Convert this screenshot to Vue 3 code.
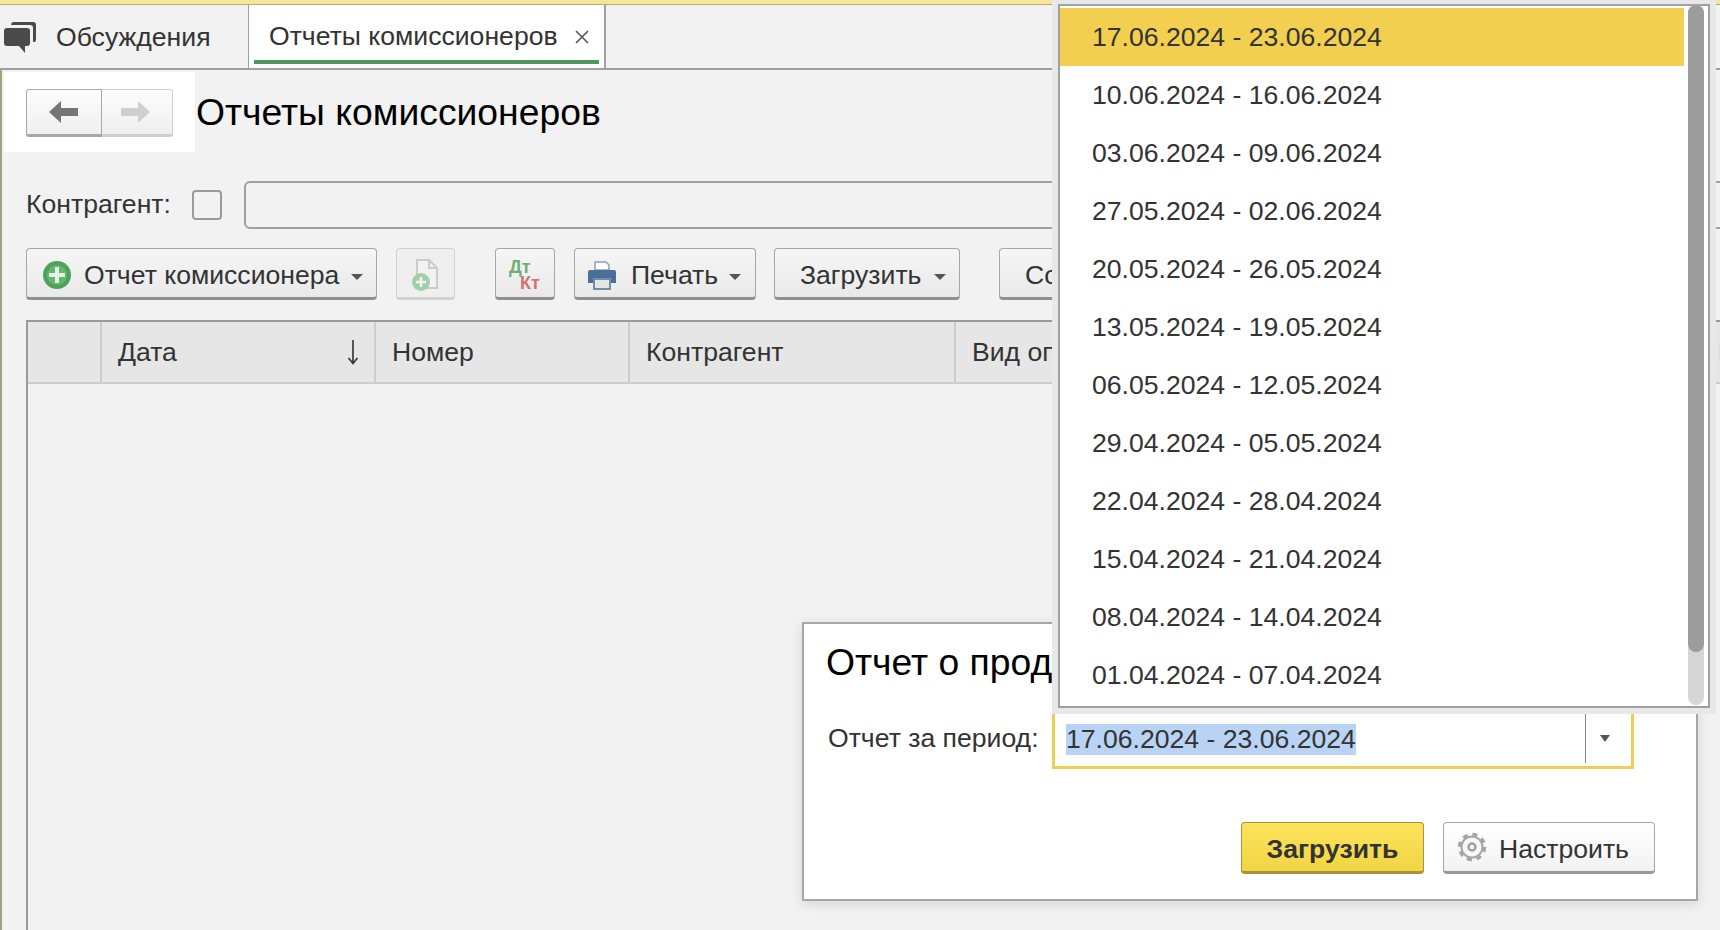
<script setup>
const periods = [
  "17.06.2024 - 23.06.2024",
  "10.06.2024 - 16.06.2024",
  "03.06.2024 - 09.06.2024",
  "27.05.2024 - 02.06.2024",
  "20.05.2024 - 26.05.2024",
  "13.05.2024 - 19.05.2024",
  "06.05.2024 - 12.05.2024",
  "29.04.2024 - 05.05.2024",
  "22.04.2024 - 28.04.2024",
  "15.04.2024 - 21.04.2024",
  "08.04.2024 - 14.04.2024",
  "01.04.2024 - 07.04.2024"
]

const columns = [
  { title: "", width: 74 },
  { title: "Дата", width: 274, sort: true },
  { title: "Номер", width: 254 },
  { title: "Контрагент", width: 326 },
  { title: "Вид операции", width: 746 },
  { title: "Номер", width: 200 }
]
</script>

<template>
  <div class="page">
    <div class="stripe"></div>

    <div class="tabs">
      <div class="tab-plain">
        <svg class="chat" width="34" height="32" viewBox="0 0 34 32">
          <path d="M10 0h20a3 3 0 0 1 3 3v15a2 2 0 0 1-2 2h-1V6a3 3 0 0 0-3-3H8a3 3 0 0 1 2-3z" fill="#4a4a4a" />
          <path d="M4 6h20a3 3 0 0 1 3 3v12a3 3 0 0 1-3 3h-2v7l-6-7H4a3 3 0 0 1-3-3V9a3 3 0 0 1 3-3z" fill="#4a4a4a" />
        </svg>
        <span>Обсуждения</span>
      </div>
      <div class="tab-active">
        <span>Отчеты комиссионеров</span>
        <svg class="close" width="16" height="16" viewBox="0 0 16 16">
          <path d="M2 2l12 12M14 2L2 14" stroke="#555" stroke-width="1.6" fill="none" />
        </svg>
        <div class="tab-line"></div>
      </div>
    </div>

    <div class="content">
      <div class="head">
        <div class="nav-box">
          <div class="nav">
            <div class="nav-back">
              <svg width="30" height="22" viewBox="0 0 30 22">
                <path d="M0 11L12 0v7h17v8H12v7z" fill="#757575" />
              </svg>
            </div>
            <div class="nav-next">
              <svg width="30" height="22" viewBox="0 0 30 22">
                <path d="M30 11L18 0v7H1v8h17v7z" fill="#cfcfcf" />
              </svg>
            </div>
          </div>
        </div>
        <h1 class="title">Отчеты комиссионеров</h1>
      </div>

      <div class="filter">
        <span class="filter-label">Контрагент:</span>
        <span class="check"></span>
        <div class="input"></div>
      </div>

      <div class="toolbar">
        <div class="btn btn-report">
          <svg width="30" height="30" viewBox="0 0 30 30">
            <circle cx="15" cy="15" r="14" fill="#4ea35a" />
            <circle cx="15" cy="15" r="10" fill="#62b96e" />
            <path d="M15 7v16M7 15h16" stroke="#e9f5ea" stroke-width="4" />
          </svg>
          <span class="btn-text">Отчет комиссионера</span>
          <i class="caret"></i>
        </div>
        <div class="btn btn-file">
          <svg width="30" height="34" viewBox="0 0 30 34">
            <path d="M6 2h12l8 8v20H6z" fill="#f2f2f2" stroke="#cbcbcb" stroke-width="2" />
            <path d="M18 2v8h8" fill="none" stroke="#cbcbcb" stroke-width="2" />
            <circle cx="10" cy="24" r="9" fill="#a3cfa8" />
            <path d="M10 19v10M5 24h10" stroke="#f2f2f2" stroke-width="2.5" />
          </svg>
        </div>
        <div class="btn btn-dtkt">
          <span class="dt">Дт</span>
          <span class="kt">Кт</span>
        </div>
        <div class="btn btn-print">
          <svg width="30" height="30" viewBox="0 0 30 30">
            <path d="M8 10V2h11l3 3v5z" fill="#fff" stroke="#88a0bd" stroke-width="1.5" />
            <path d="M3 10h24a2 2 0 0 1 2 2v11h-5v-5H6v5H1V12a2 2 0 0 1 2-2z" fill="#4c6f99" />
            <path d="M7 19h16v10H7z" fill="#e6e6e6" stroke="#4c6f99" stroke-width="1.5" />
          </svg>
          <span class="btn-text">Печать</span>
          <i class="caret"></i>
        </div>
        <div class="btn btn-load">
          <span class="btn-text">Загрузить</span>
          <i class="caret"></i>
        </div>
        <div class="btn btn-create">
          <span class="btn-text">Создать</span>
        </div>
      </div>

      <div class="table">
        <div class="thead">
          <div
            v-for="(col, i) in columns"
            :key="i"
            class="th"
            :style="{ width: col.width + 'px' }"
          >
            <span>{{ col.title }}</span>
            <svg v-if="col.sort" class="sort" width="12" height="26" viewBox="0 0 12 26">
              <path d="M6 1v23M1.5 19L6 24.500l4.500-5.500" fill="none" stroke="#333" stroke-width="1.6" />
            </svg>
          </div>
        </div>
      </div>
    </div>

    <div class="dialog">
      <div class="dialog-title">Отчет о продажах</div>
      <div class="dialog-row">
        <span class="dialog-label">Отчет за период:</span>
        <div class="field">
          <span class="field-text">17.06.2024 - 23.06.2024</span>
          <div class="field-btn"><i class="caret caret-small"></i></div>
        </div>
      </div>
      <div class="dialog-actions">
        <div class="btn-primary">Загрузить</div>
        <div class="btn-setup">
          <svg width="32" height="32" viewBox="0 0 32 32">
            <circle cx="16" cy="16" r="12.500" fill="none" stroke="#a6a6a6" stroke-width="3.500" stroke-dasharray="5 4.820" />
            <circle cx="16" cy="16" r="10.500" fill="#f8f8f8" stroke="#a6a6a6" stroke-width="2" />
            <circle cx="16" cy="16" r="3.500" fill="none" stroke="#a0a0a0" stroke-width="2.500" />
          </svg>
          <span>Настроить</span>
        </div>
      </div>
    </div>

    <div class="dropdown">
      <div
        v-for="(period, i) in periods"
        :key="period"
        class="row"
        :class="{ 'row-current': i === 0 }"
      >{{ period }}</div>
      <div class="track"><div class="thumb"></div></div>
    </div>
  </div>
</template>

<style>
html,
body {
  margin: 0;
  overflow: hidden;
}
</style>

<style scoped>
.page {
  position: relative;
  width: 1720px;
  height: 930px;
  overflow: hidden;
  background: #f2f2f2;
  font-family: "Liberation Sans", Arial, sans-serif;
  font-size: 26.600px;
  color: #333;
  display: flex;
  flex-direction: column;
}

.stripe {
  flex: none;
  height: 4px;
  background: #f7e59b;
  border-bottom: 1px solid #b9aa70;
}

.tabs {
  flex: none;
  height: 63px;
  display: flex;
  border-bottom: 2px solid #a0a0a0;
}

.tab-plain {
  width: 248px;
  display: flex;
  align-items: center;
  padding: 0 0 0 3px;
  box-sizing: border-box;
  margin-top: 2px;
}

.tab-plain span {
  margin-left: 19px;
}

.chat {
  flex: none;
}

.tab-active {
  position: relative;
  width: 358px;
  box-sizing: border-box;
  padding: 0 14px 0 20px;
  margin-bottom: -2px;
  display: flex;
  align-items: center;
  justify-content: space-between;
  background: #fff;
  border-left: 1px solid #a0a0a0;
  border-right: 2px solid #a0a0a0;
  border-bottom: 2px solid #a0a0a0;
}

.tab-line {
  position: absolute;
  left: 5px;
  right: 5px;
  bottom: 4px;
  height: 4px;
  background: #4f9a5b;
}

.content {
  flex: 1;
  min-height: 0;
  display: flex;
  flex-direction: column;
  border-left: 2px solid #a89f7c;
}

.head {
  flex: none;
  display: flex;
  align-items: center;
  height: 80px;
  margin-top: 2px;
  padding-left: 2px;
}

.nav-box {
  width: 191px;
  height: 80px;
  box-sizing: border-box;
  padding: 17px 22px;
  background: #fff;
}

.nav {
  display: flex;
  width: 147px;
  height: 48px;
}

.nav-back,
.nav-next {
  display: flex;
  align-items: center;
  justify-content: center;
  box-sizing: border-box;
  height: 48px;
  background: linear-gradient(#fdfdfd, #efefef);
}

.nav-back {
  width: 76px;
  border: 1px solid #a8a8a8;
  border-bottom: 3px solid #a8a8a8;
  border-radius: 3px 0 0 3px;
}

.nav-next {
  width: 71px;
  padding-right: 4px;
  border: 1px solid #cfcfcf;
  border-left: none;
  border-bottom: 3px solid #cfcfcf;
  border-radius: 0 3px 3px 0;
}

.title {
  margin: 0 0 0 1px;
  font-size: 37.300px;
  font-weight: 400;
  color: #000;
  white-space: nowrap;
}

.filter {
  flex: none;
  display: flex;
  align-items: center;
  height: 48px;
  margin-top: 29px;
  padding-left: 24px;
}

.filter-label {
  width: 166px;
  flex: none;
  margin-top: -2px;
}

.check {
  flex: none;
  width: 30px;
  height: 30px;
  box-sizing: border-box;
  border: 2px solid #9a9a9a;
  border-radius: 4px;
}

.input {
  flex: none;
  margin-left: 22px;
  width: 1600px;
  height: 48px;
  box-sizing: border-box;
  border: 2px solid #a0a0a0;
  border-radius: 6px;
}

.toolbar {
  flex: none;
  display: flex;
  height: 52px;
  margin-top: 19px;
  padding-left: 24px;
}

.btn {
  flex: none;
  display: flex;
  align-items: center;
  box-sizing: border-box;
  height: 52px;
  padding-top: 4px;
  background: linear-gradient(#f6f6f6, #e9e9e9);
  border: 1px solid #a6a6a6;
  border-bottom: 3px solid #8f8f8f;
  border-radius: 4px;
  white-space: nowrap;
}

.btn-text {
  flex: none;
}

.caret {
  display: inline-block;
  flex: none;
  width: 0;
  height: 0;
  border-left: 6px solid transparent;
  border-right: 6px solid transparent;
  border-top: 6px solid #555;
  margin-top: 3px;
}

.caret-small {
  border-left-width: 5px;
  border-right-width: 5px;
  border-top-width: 7px;
}

.btn-report {
  width: 351px;
  padding-left: 15px;
}

.btn-report .btn-text {
  margin-left: 12px;
}

.btn-report .caret {
  margin-left: 12px;
}

.btn-file {
  width: 59px;
  margin-left: 19px;
  justify-content: center;
  border-color: #d2d2d2;
  background: #efefef;
}

.btn-dtkt {
  position: relative;
  width: 60px;
  margin-left: 40px;
  font-weight: 700;
  font-size: 18px;
  line-height: 16px;
}

.dt {
  position: absolute;
  left: 13px;
  top: 10px;
  color: #6fae78;
}

.kt {
  position: absolute;
  left: 24px;
  top: 26px;
  color: #d9706f;
}

.btn-print {
  width: 182px;
  margin-left: 19px;
  padding-left: 12px;
}

.btn-print .btn-text {
  margin-left: 14px;
}

.btn-print .caret {
  margin-left: 11px;
}

.btn-load {
  width: 186px;
  margin-left: 18px;
  padding-left: 25px;
}

.btn-load .caret {
  margin-left: 13px;
}

.btn-create {
  width: 200px;
  margin-left: 39px;
  padding-left: 25px;
}

.table {
  flex: 1;
  min-height: 0;
  margin: 20px 0 0 24px;
  border-left: 2px solid #9a9a9a;
  border-top: 2px solid #9a9a9a;
}

.thead {
  display: flex;
  height: 60px;
  background: #e6e6e6;
  border-bottom: 2px solid #cdcdcd;
}

.th {
  flex: none;
  position: relative;
  display: flex;
  align-items: center;
  box-sizing: border-box;
  padding-left: 16px;
  border-right: 2px solid #cdcdcd;
  white-space: nowrap;
}

.sort {
  position: absolute;
  right: 15px;
  top: 17px;
}

.dialog {
  position: absolute;
  left: 802px;
  top: 622px;
  width: 896px;
  height: 279px;
  box-sizing: border-box;
  padding: 16px 41px 0 22px;
  background: #fff;
  border: 2px solid #a6a6a6;
  box-shadow: 0 3px 12px rgba(0, 0, 0, 0.12);
}

.dialog-title {
  height: 44px;
  line-height: 44px;
  font-size: 37.300px;
  color: #000;
  white-space: nowrap;
}

.dialog-row {
  display: flex;
  align-items: center;
  margin-top: 23px;
  padding-left: 2px;
}

.dialog-label {
  flex: none;
  width: 224px;
}

.field {
  flex: none;
  display: flex;
  align-items: center;
  justify-content: space-between;
  box-sizing: border-box;
  width: 582px;
  height: 62px;
  padding-left: 11px;
  border: 3px solid #ecd056;
  border-top: none;
}

.field-text {
  background: #b9d3f5;
  line-height: 31px;
  margin-top: 6px;
}

.field-btn {
  display: flex;
  align-items: center;
  justify-content: center;
  box-sizing: border-box;
  width: 46px;
  height: 52px;
  padding-right: 8px;
  border-left: 1px solid #888;
}

.dialog-actions {
  display: flex;
  justify-content: flex-end;
  gap: 19px;
  margin-top: 53px;
}

.btn-primary,
.btn-setup {
  display: flex;
  align-items: center;
  box-sizing: border-box;
  height: 52px;
  padding-top: 4px;
  border-radius: 4px;
}

.btn-primary {
  width: 183px;
  justify-content: center;
  font-weight: 700;
  background: linear-gradient(#fbe35c, #f2d544);
  border: 1px solid #a9923a;
  border-bottom: 3px solid #a9923a;
}

.btn-setup {
  width: 212px;
  padding-left: 12px;
  background: linear-gradient(#fff, #f2f2f2);
  border: 1px solid #a6a6a6;
  border-bottom: 3px solid #9a9a9a;
}

.btn-setup svg {
  margin-top: -4px;
}

.btn-setup span {
  margin-left: 11px;
}

.dropdown {
  position: absolute;
  left: 1058px;
  top: 4px;
  width: 652px;
  height: 704px;
  box-sizing: border-box;
  padding: 2px 0 0 0;
  background: #fff;
  border: 2px solid #a0a0a0;
  box-shadow: 0 0 0 6px #e8e8e8;
}

.row {
  width: 624px;
  height: 58px;
  line-height: 58px;
  padding-left: 32px;
  box-sizing: border-box;
}

.row-current {
  background: #f2cf4e;
}

.track {
  position: absolute;
  right: 4px;
  top: -1px;
  bottom: 1px;
  width: 16px;
  border-radius: 8px;
  background: #d6d6d6;
}

.thumb {
  height: 647px;
  border-radius: 8px;
  background: #9c9c9c;
}
</style>
